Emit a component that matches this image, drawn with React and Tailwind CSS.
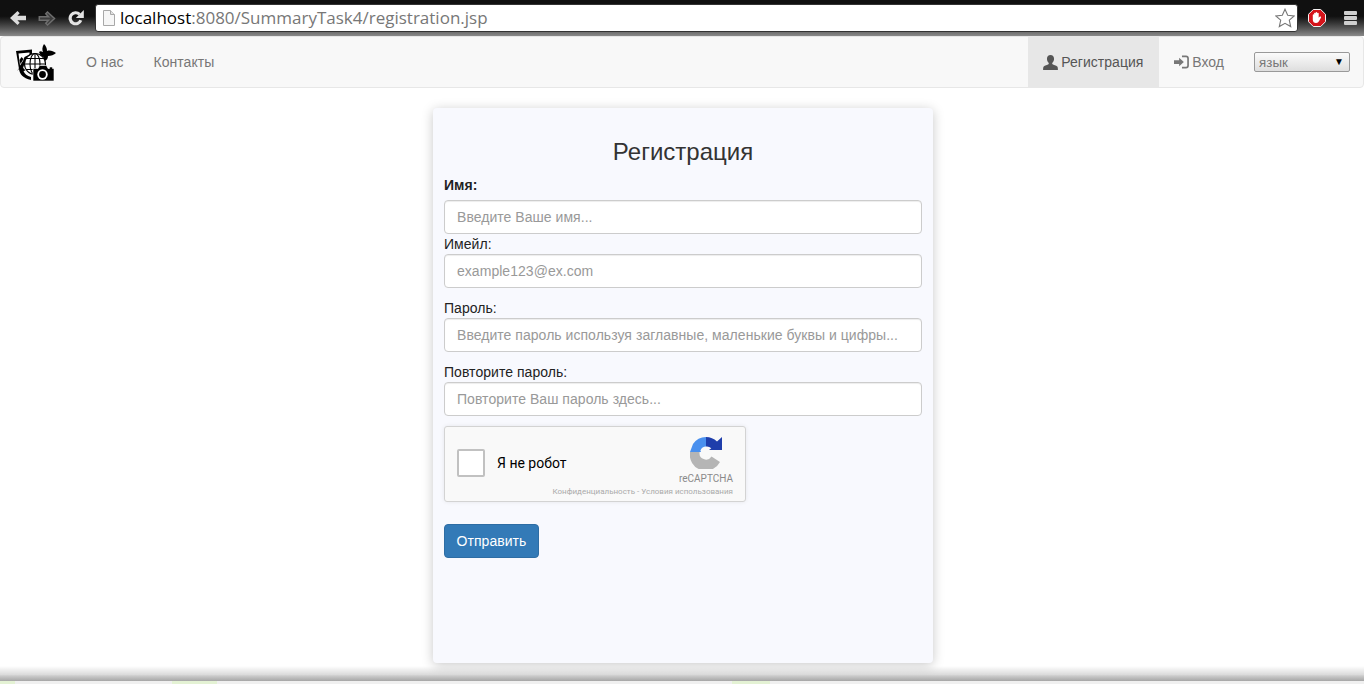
import { useState } from 'react';

const BackArrow = ({ className }) => (
  <svg viewBox="0 0 16 14" className={className} fill="currentColor">
    <path d="M7.500 0 0 7l7.500 7 2.200-2.200L7.400 9.200H16V4.800H7.400l2.300-2.600z" />
  </svg>
);

const ForwardArrow = ({ className }) => (
  <svg viewBox="0 0 18 15" className={className} fill="#3d3d3d" stroke="#6e6e6e" strokeWidth="1.500">
    <path d="M9.500 1 16.500 7.500l-7 6.500-1.700-1.700 2.700-3H1.300V5.700h9.200l-2.700-3z" />
  </svg>
);

const Reload = ({ className }) => (
  <svg viewBox="0 0 16 16" className={className} fill="none">
    <path d="M12.800 10.200A5.500 5.500 0 1 1 11.600 4.400" stroke="currentColor" strokeWidth="3.200" />
    <path d="M15.800 0v8h-8z" fill="currentColor" />
  </svg>
);

const PageIcon = ({ className }) => (
  <svg viewBox="0 0 12 16" className={className}>
    <path d="M.5.5h7l4 4v11H.5z" fill="#f6f6f6" stroke="#a8a8a8" />
    <path d="M7.500.5v4h4" fill="#e2e2e2" stroke="#a8a8a8" />
  </svg>
);

const StarIcon = ({ className }) => (
  <svg viewBox="0 0 20 20" className={className} fill="#fff" stroke="#777" strokeWidth="1.100">
    <path d="m10 1.200 2.700 6 6.500.7-4.900 4.300 1.400 6.400L10 15.300l-5.700 3.300 1.400-6.400L.8 7.900l6.500-.7z" />
  </svg>
);

const AdBlock = ({ className }) => (
  <svg viewBox="0 0 18 18" className={className}>
    <path d="M5.300.5h7.400l4.800 4.800v7.400l-4.800 4.800H5.300L.5 12.700V5.300z" fill="#d5141b" stroke="#f4f4f4" />
    <path d="M4.800 9.200V6c0-1 1.300-1 1.300 0V4.500c0-1.100 1.500-1.100 1.500 0V3.800c0-1.100 1.600-1.100 1.600 0v.7c0-1.100 1.500-1.100 1.500 0v4.300c.6-1 1.300-1.500 2-1.200.6.300.4.900.1 1.400l-1.700 3.100c-.7 1.200-1.500 1.900-3 1.900H8c-2 0-3.200-1.300-3.200-3.300z" fill="#fff" />
  </svg>
);

const UserIcon = ({ className }) => (
  <svg viewBox="0 0 14 14" className={className} fill="currentColor">
    <path d="M7 0c2 0 3.300 1.600 3.300 3.600 0 1.400-.6 2.900-1.500 3.700-.3.300-.3 1 .1 1.300.9.600 3.400 1.100 4.400 2.200.5.600.6 1.600.6 3.200H.1c0-1.600.1-2.600.6-3.200 1-1.100 3.500-1.600 4.400-2.200.4-.3.400-1 .1-1.300-.9-.8-1.500-2.300-1.500-3.700C3.700 1.600 5 0 7 0z" />
  </svg>
);

const LoginIcon = ({ className }) => (
  <svg viewBox="0 0 16 14" className={className}>
    <path d="M5.500 2.500 10.500 7l-5 4.500V9H0V5h5.500z" fill="currentColor" />
    <path d="M8.500 1h4.300a2.200 2.200 0 0 1 2.200 2.200v7.600a2.200 2.200 0 0 1-2.200 2.200H8.500" fill="none" stroke="currentColor" strokeWidth="1.800" />
  </svg>
);

// site logo: picture, globe, butterfly and camera piled together
const SiteLogo = ({ className }) => (
  <svg viewBox="0 0 40 38" className={className}>
    <path d="M0 8 16 6.500V13l-6 3-3 9-4 1z" fill="#000" />
    <path d="M2.500 10.500 13.500 9.500v2l-5 2.500-1.500 4-3 4.500z" fill="#fff" />
    <path d="M3.500 17 5.500 14l2 2-3 5z" fill="#000" />
    <path d="M28 1C26 4 26 7 27 9 25 8 24 8 23 9 24 12 26 14 28 14 27 16 28 18 29 18 31 17 32 15 32 13 35 13 38 12 40 10 37 8 34 7 31 8 31 5 30 3 28 1z" fill="#000" />
    <g fill="#fff" stroke="#000" strokeWidth="1.100">
      <circle cx="19" cy="21" r="10.500" />
      <ellipse cx="19" cy="21" rx="5" ry="10.500" fill="none" />
      <path d="M19 10.500v21M8.500 21h21M10 15.500h18M10 26.500h18" fill="none" />
    </g>
    <path d="M17 25.500h5l1.500-3h7l1.500 3h1.500v-1.500h3v1.500h1.500V38H17z" fill="#000" stroke="#fff" strokeWidth=".6" />
    <circle cx="26.500" cy="31.500" r="5.200" fill="#fff" />
    <circle cx="26.500" cy="31.500" r="3.400" fill="#000" />
    <path d="M3 26c.5 5 4 9 12 11v-3c-4-1-6.500-3-7.500-6l2-.5-4.500-5-4 5.500z" fill="#000" />
  </svg>
);

const RecaptchaLogo = ({ className }) => (
  <svg viewBox="0 0 32 32" className={className}>
    <path d="M16 0A16 16 0 0 0 3 7L0 15H11L10.400 13.400A6.500 6.500 0 0 1 16 9.500z" fill="#4a90ee" />
    <path d="M16 0A16 16 0 0 1 27 4.500L32 0V13H19L21.300 11.200A6.500 6.500 0 0 0 16 9.500z" fill="#1f3eab" />
    <path d="M0 15H9.600A6.500 6.500 0 0 0 21.500 19.500L30 25A16 16 0 0 1 0 15z" fill="#b5b5b5" />
  </svg>
);

const labelClass = 'block text-[14px] leading-5 text-[#222]';
const inputClass =
  'block w-full h-[34px] rounded bg-white border border-[#ccc] px-3 text-[14px] text-[#555] placeholder:text-[#999] shadow-[inset_0_1px_1px_rgba(0,0,0,0.075)] outline-none';

const App = () => {
  const [lang, setLang] = useState('');

  return (
    <div className="h-screen overflow-hidden flex flex-col bg-white font-['Liberation_Sans',Arial,sans-serif] text-[14px] tracking-[0.04px] text-[#333]">
      {/* Browser toolbar */}
      <div className="h-[36px] shrink-0 flex items-center bg-gradient-to-b from-[#101010] from-45% to-[#8a8a8a]">
        <div className="w-[95px] shrink-0 flex items-center pl-[10px]">
          <BackArrow className="w-[16px] h-[14px] text-[#dcdcdc]" />
          <ForwardArrow className="ml-[12px] w-[18px] h-[15px]" />
          <Reload className="ml-[12px] w-[16px] h-[16px] text-[#e4e4e4]" />
        </div>
        <div className="h-[28px] -mt-[1px] flex-1 flex items-center rounded-[3px] bg-white border border-[#333] pl-[7px] pr-[2px]">
          <PageIcon className="w-[12px] h-[16px] shrink-0" />
          <span className="ml-[5px] flex-1 font-['Open_Sans',sans-serif] text-[17px] tracking-normal text-[#777] whitespace-nowrap">
            <span className="text-black">localhost</span>:8080/SummaryTask4/registration.jsp
          </span>
          <StarIcon className="w-[20px] h-[20px] shrink-0" />
        </div>
        <div className="w-[66px] shrink-0 flex items-center pl-[10px] gap-[18px]">
          <AdBlock className="w-[18px] h-[18px]" />
          <div className="flex flex-col gap-[1px] w-[13px]">
            <span className="h-[4px] rounded-[1px] bg-[#cfcfcf]" />
            <span className="h-[4px] rounded-[1px] bg-[#cfcfcf]" />
            <span className="h-[4px] rounded-[1px] bg-[#cfcfcf]" />
          </div>
        </div>
      </div>

      {/* Navbar */}
      <nav className="h-[52px] shrink-0 flex items-stretch bg-[#f8f8f8] border border-[#e7e7e7] rounded text-[#777]">
        <div className="flex items-center pl-[15px] w-[70px]">
          <SiteLogo className="w-[40px] h-[38px]" />
        </div>
        <a className="flex items-center px-[15px]">О нас</a>
        <a className="flex items-center px-[15px]">Контакты</a>
        <div className="ml-auto flex items-stretch pr-[13px]">
          <a className="flex items-center gap-[3px] pl-[15px] pr-[15px] bg-[#e7e7e7] text-[#555]">
            <UserIcon className="w-[15px] h-[15px]" />
            <span className="w-[83px]">Регистрация</span>
          </a>
          <a className="flex items-center gap-[3px] px-[15px]">
            <LoginIcon className="w-[15px] h-[14px]" />
            Вход
          </a>
          <div className="relative self-center ml-[15px] w-[96px] h-[20px]">
            <select
              value={lang}
              onChange={(e) => setLang(e.target.value)}
              className="block w-full h-full appearance-none rounded-[2px] border border-[#999] bg-gradient-to-b from-[#fbfbfb] to-[#dedede] pl-[4px] text-[13.3px] text-[#777] outline-none"
            >
              <option value="">язык</option>
            </select>
            <span className="absolute right-[6px] top-[3px] text-[10px] leading-[14px] text-black pointer-events-none">▼</span>
          </div>
        </div>
      </nav>

      {/* Form */}
      <main className="flex-1 min-h-0 flex justify-center pt-[20px] pl-[2px]">
        <form className="w-[500px] h-[555px] rounded bg-[#f8f9fe] px-[11px] pt-[31px] shadow-[0_2px_12px_rgba(0,0,0,0.22)]">
          <h2 className="text-center text-[24px] tracking-normal leading-[26px] text-[#333] mb-[10px]">Регистрация</h2>

          <label className={`${labelClass} font-bold mb-[5px]`}>Имя:</label>
          <input className={inputClass} placeholder="Введите Ваше имя..." />

          <label className={labelClass}>Имейл:</label>
          <input className={inputClass} placeholder="example123@ex.com" />

          <label className={`${labelClass} mt-[10px]`}>Пароль:</label>
          <input className={inputClass} placeholder="Введите пароль используя заглавные, маленькие буквы и цифры..." />

          <label className={`${labelClass} mt-[10px]`}>Повторите пароль:</label>
          <input className={inputClass} placeholder="Повторите Ваш пароль здесь..." />

          {/* reCAPTCHA */}
          <div className="mt-[10px] w-[302px] h-[76px] flex rounded-[3px] border border-[#d3d3d3] bg-[#f9f9f9] shadow-[0_0_4px_rgba(0,0,0,0.08)] tracking-normal font-['Roboto',sans-serif]">
            <div className="w-[100px] shrink-0 flex items-center h-[72px] pl-[12px]">
              <div className="shrink-0 w-[28px] h-[28px] rounded-[2px] border-2 border-[#c1c1c1] bg-white" />
              <span className="ml-[12px] text-[14px] text-black whitespace-nowrap">Я не робот</span>
            </div>
            <div className="ml-auto flex flex-col items-end pr-[12px] pt-[10px]">
              <RecaptchaLogo className="w-[32px] h-[32px] mr-[11px]" />
              <span className="mt-[4px] text-[10px] leading-[12px] text-[#8a8a8a]">reCAPTCHA</span>
              <span className="mt-[2px] text-[8px] leading-[10px] text-[#aaa] whitespace-nowrap">Конфиденциальность - Условия использования</span>
            </div>
          </div>

          <button type="button" className="mt-[22px] block h-[34px] w-[95px] rounded bg-[#337ab7] border border-[#2e6da4] text-white text-[14px]">
            Отправить
          </button>
        </form>
      </main>

      {/* Window shadow at the bottom edge, the next page peeks out under it */}
      <div className="relative shrink-0 h-[18px]">
        <div className="h-[15px] bg-gradient-to-b from-transparent via-[#00000026] via-60% to-[#a6a6a6]" />
        <div className="h-[3px] flex bg-[#f0f0f0]">
          <span className="w-[15px] bg-[#e4f2d4]" />
          <span className="ml-[157px] w-[45px] bg-[#e4f2d4]" />
          <span className="ml-[515px] w-[38px] bg-[#e4f2d4]" />
        </div>
      </div>
    </div>
  );
};

export default App;
